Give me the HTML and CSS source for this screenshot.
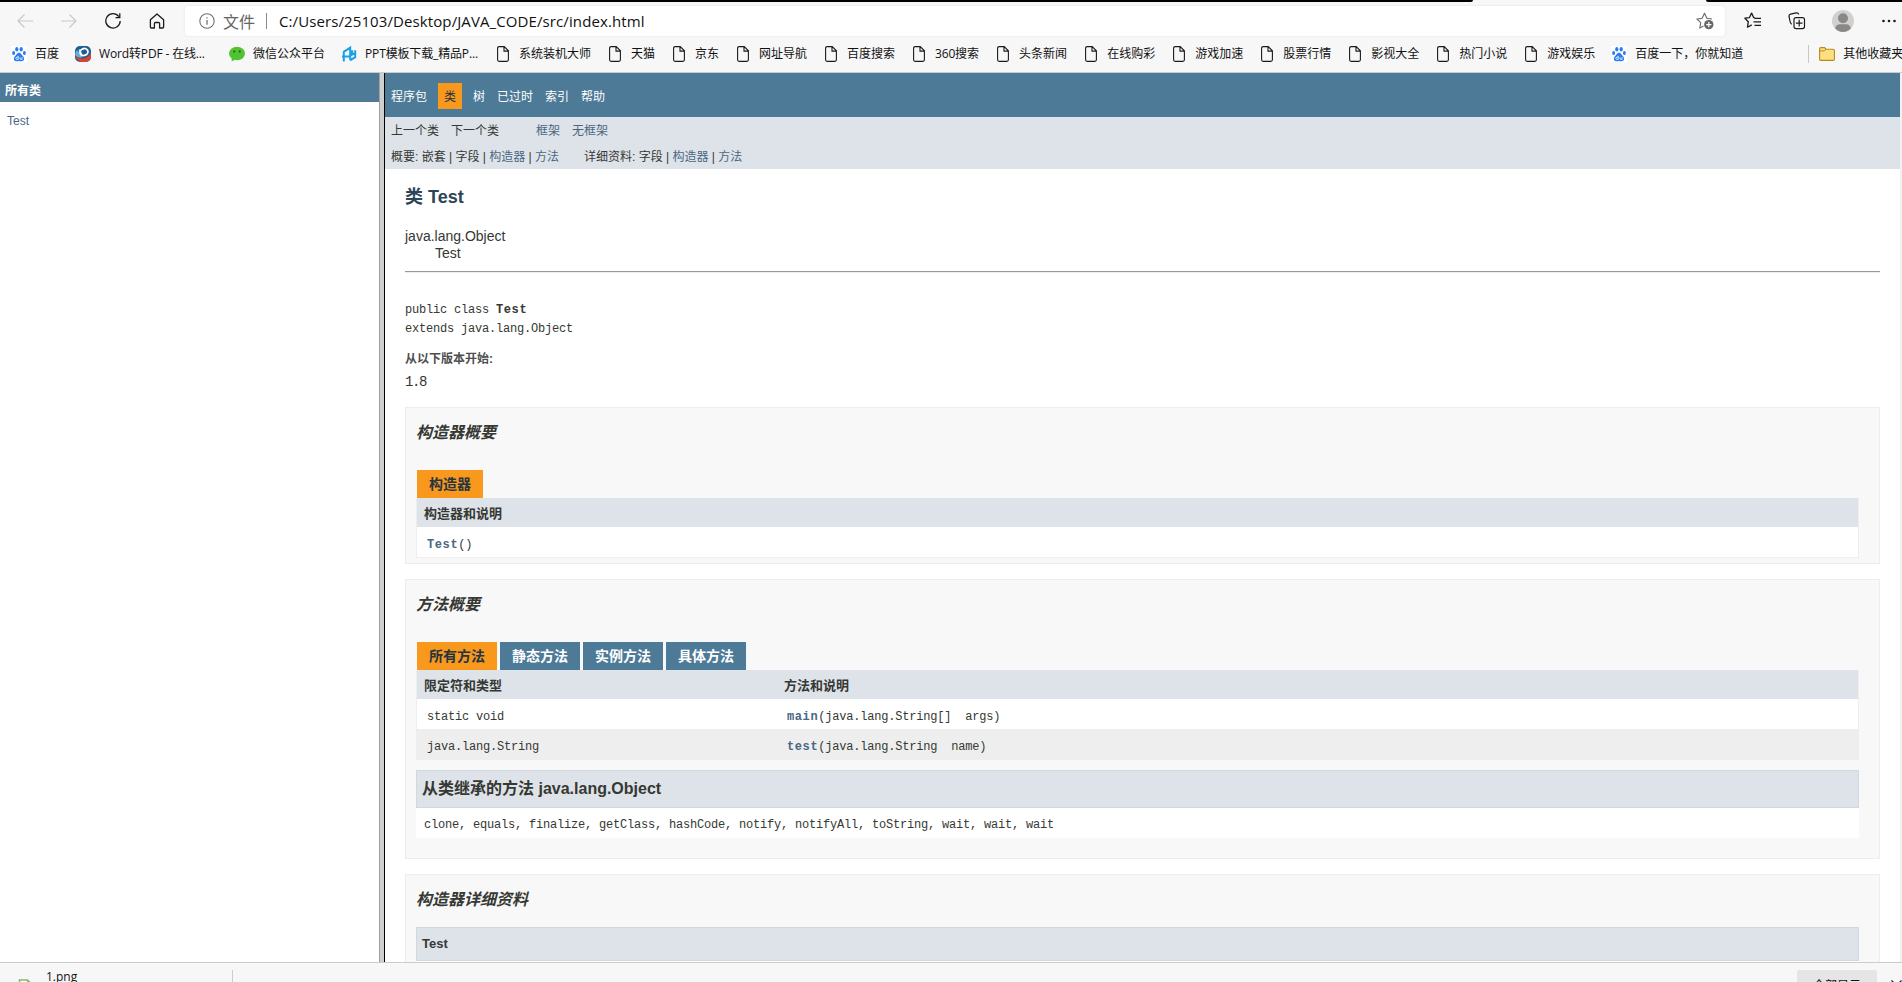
FILE: index.html
```html
<!DOCTYPE html>
<html lang="zh-CN">
<head>
    <meta charset="UTF-8">
    <title>Test</title>
    <link rel="stylesheet" href="styles.css">
</head>
<body>
    <!-- icons used more than once -->
    <svg class="defs" width="0" height="0">
        <symbol id="page" viewBox="0 0 16 16"><path d="M2.600 2.200q0-1.600 1.600-1.600h5l4.200 4.200v9q0 1.600-1.600 1.600H4.200q-1.600 0-1.600-1.600zM9 .8v4.300h4.300" fill="none" stroke="#1b1b1b" stroke-width="1.100"/></symbol>
        <symbol id="paw" viewBox="0 0 16 16">
            <rect width="16" height="16" fill="#fff"/>
            <g fill="#2a7cf0"><ellipse cx="5.800" cy="3.300" rx="1.600" ry="2.300"/><ellipse cx="10.200" cy="3.300" rx="1.600" ry="2.300"/><ellipse cx="2.600" cy="7" rx="1.500" ry="2.100"/><ellipse cx="13.400" cy="7" rx="1.500" ry="2.100"/><path d="M8 6.800c2 0 2.400 2 4 3.400 1.900 1.700 1.300 5-1.200 5-1 0-1.700-.3-2.800-.3s-1.800.3-2.800.3c-2.500 0-3.100-3.300-1.200-5C5.600 8.800 6 6.800 8 6.800z"/></g>
            <path d="M7.200 9.800v3.600H6q-1.200 0-1.200-1.100T6 11.200h1.200M9 11.200v1.400q0 .8.800.8h1.300v-2.300" fill="none" stroke="#fff" stroke-width=".8"/>
        </symbol>
    </svg>

    <div class="tabstrip"><span class="strip-left"></span><span class="strip-right"></span></div>

    <div class="toolbar">
        <div class="nav-buttons">
            <svg width="16" height="16" viewBox="0 0 16 16"><path d="M16 8H1M7.500 1.500 1 8l6.500 6.500" fill="none" stroke="#c9c9c9" stroke-width="1.200"/></svg>
            <svg width="16" height="16" viewBox="0 0 16 16"><path d="M0 8h15M8.500 1.500 15 8l-6.500 6.500" fill="none" stroke="#c9c9c9" stroke-width="1.200"/></svg>
            <svg width="16" height="16" viewBox="0 0 16 16"><path d="M13.800 3.600A7.200 7.200 0 1 0 15.200 8M14.800.3v4.300h-4.300" fill="none" stroke="#1b1b1b" stroke-width="1.300"/></svg>
            <svg width="16" height="16" viewBox="0 0 16 16"><path d="M1.400 6.700 8 .9l6.600 5.800V14q0 1-1 1h-3v-4.500q0-1-1-1H6.400q-1 0-1 1V15h-3q-1 0-1-1z" fill="none" stroke="#1b1b1b" stroke-width="1.300" stroke-linejoin="round"/></svg>
        </div>
        <div class="address">
            <svg width="16" height="16" viewBox="0 0 16 16"><circle cx="8" cy="8" r="7.200" fill="none" stroke="#717171" stroke-width="1.100"/><path d="M8 7v4.800M8 4.200v1.400" stroke="#717171" stroke-width="1.300"/></svg>
            <span class="scheme">文件</span>
            <span class="bar"></span>
            <span class="url">C:/Users/25103/Desktop/JAVA_CODE/src/index.html</span>
            <svg class="fav" width="18" height="18" viewBox="0 0 18 18"><path d="M7.500 14 3.800 16l.9-5.400L.9 7l5.200-.7L8.500 1.200l2.400 5.100L16 7" fill="none" stroke="#717171" stroke-width="1.200" stroke-linejoin="round"/><circle cx="12.800" cy="12.600" r="4.700" fill="#686868"/><path d="M12.800 10v5.200M10.200 12.600h5.200" stroke="#fff" stroke-width="1.200"/></svg>
        </div>
        <div class="actions">
            <svg width="18" height="18" viewBox="0 0 18 18"><path d="M11 5.800 9.600 5.600 7.600 1.100 5.500 5.600.9 6.200l3.400 3.500-.8 5.500 4.200-2.300M10.500 6.300H17M9.500 9.800H17M10.500 13.300H17" fill="none" stroke="#1b1b1b" stroke-width="1.300" stroke-linejoin="round"/></svg>
            <svg width="18" height="18" viewBox="0 0 18 18"><path d="M3.800 12.200Q2.500 11.500 2.200 10L1 4.500Q.7 2.600 2.500 2.100L8.300.9q1.800-.3 2.500 1.600M8 5.600h6.500q2 0 2 2v7q0 2-2 2H8q-2 0-2-2v-7q0-2 2-2M11.200 7.800v6.600M7.900 11.100h6.600" fill="none" stroke="#1b1b1b" stroke-width="1.200"/></svg>
            <svg class="avatar" width="22" height="22" viewBox="0 0 22 22"><circle cx="11" cy="11" r="11" fill="#d2d0ce"/><circle cx="11" cy="8.300" r="5" fill="#8a8886"/><path d="M3.200 18.200Q4 14.200 8 14.200h6q4 0 4.800 4-3 3.800-7.800 3.800t-7.800-3.800z" fill="#8a8886"/></svg>
            <svg width="16" height="16" viewBox="0 0 16 16"><g fill="#1b1b1b"><circle cx="2.500" cy="8" r="1.300"/><circle cx="8" cy="8" r="1.300"/><circle cx="13.500" cy="8" r="1.300"/></g></svg>
        </div>
    </div>

    <div class="bookmarks">
        <div class="bm"><svg><use href="#paw"/></svg><span>百度</span></div>
        <div class="bm"><svg viewBox="0 0 16 16"><rect width="16" height="16" rx="5" fill="#1d5f94"/><path d="M0 9q5 5 10 3t6-6v5q-1 5-6 5H6q-4-1-6-7z" fill="#d9432f"/><path d="M0 9q3 3 6 3l1-3-5-5Q0 6 0 9z" fill="#5fb0dc"/><ellipse cx="9" cy="6" rx="4" ry="3.400" fill="none" stroke="#fff" stroke-width="1.800" transform="rotate(-20 9 6)"/><path d="M4.500 3.500 7 10.500" stroke="#fff" stroke-width="1.500"/></svg><span class="wide">Word转PDF - 在线...</span></div>
        <div class="bm"><svg viewBox="0 0 16 16"><ellipse cx="8" cy="7.500" rx="8" ry="6.700" fill="#51c332"/><path d="m3 12-.5 3.500L6 13.800z" fill="#51c332"/><circle cx="5.300" cy="5.500" r="1.100" fill="#245b17"/><circle cx="10.700" cy="5.500" r="1.100" fill="#245b17"/></svg><span>微信公众平台</span></div>
        <div class="bm"><svg viewBox="0 0 16 16"><path d="M2.800 15.500V5.800L9.200 1.600v12.700M1 10.600h7.500M11.200 4.300v4.200l3-1.600V4.200M14.200 6.800v4.300l-5 3.200" fill="none" stroke="#1ba0e8" stroke-width="2"/></svg><span class="wide">PPT模板下载_精品P...</span></div>
        <div class="bm"><svg><use href="#page"/></svg><span>系统装机大师</span></div>
        <div class="bm"><svg><use href="#page"/></svg><span>天猫</span></div>
        <div class="bm"><svg><use href="#page"/></svg><span>京东</span></div>
        <div class="bm"><svg><use href="#page"/></svg><span>网址导航</span></div>
        <div class="bm"><svg><use href="#page"/></svg><span>百度搜索</span></div>
        <div class="bm"><svg><use href="#page"/></svg><span class="narrow">360搜索</span></div>
        <div class="bm"><svg><use href="#page"/></svg><span>头条新闻</span></div>
        <div class="bm"><svg><use href="#page"/></svg><span>在线购彩</span></div>
        <div class="bm"><svg><use href="#page"/></svg><span>游戏加速</span></div>
        <div class="bm"><svg><use href="#page"/></svg><span>股票行情</span></div>
        <div class="bm"><svg><use href="#page"/></svg><span>影视大全</span></div>
        <div class="bm"><svg><use href="#page"/></svg><span>热门小说</span></div>
        <div class="bm"><svg><use href="#page"/></svg><span>游戏娱乐</span></div>
        <div class="bm"><svg><use href="#paw"/></svg><span>百度一下，你就知道</span></div>
        <div class="bm others"><svg viewBox="0 0 16 16"><path d="M.6 3q0-1.400 1.400-1.400h3.600L7 3.200h7q1.400 0 1.400 1.400V13q0 1.400-1.400 1.400H2Q.6 14.400.6 13z" fill="#ffdf82" stroke="#b58a1c" stroke-width="1.100"/><path d="M.6 4.900h4.600L7 3.200" fill="none" stroke="#b58a1c"/></svg><span>其他收藏夹</span></div>
    </div>

    <div class="frames">
        <div class="left-frame">
            <h1 class="bar-title">所有类</h1>
            <a class="class-link">Test</a>
        </div>
        <div class="splitter"></div>
        <div class="right-frame">
            <ul class="top-nav">
                <li>程序包</li><li class="active">类</li><li>树</li><li>已过时</li><li>索引</li><li>帮助</li>
            </ul>
            <div class="sub-nav">
                <div class="sub-row"><span>上一个类</span><span>下一个类</span><a class="frames-link">框架</a><a>无框架</a></div>
                <div class="sub-row last"><span class="outline">概要: 嵌套 | 字段 | <a>构造器</a> | <a>方法</a></span><span>详细资料: 字段 | <a>构造器</a> | <a>方法</a></span></div>
            </div>
            <div class="content">
                <h2 class="title">类 Test</h2>
                <ul class="inheritance">
                    <li>java.lang.Object</li>
                    <li class="child">Test</li>
                </ul>
                <hr>
                <pre>public class <b>Test</b>
extends java.lang.Object</pre>
                <div class="since-label">从以下版本开始:</div>
                <div class="since">1.8</div>

                <div class="block constructors">
                    <h3>构造器概要</h3>
                    <div class="tabs"><span class="tab active">构造器</span></div>
                    <div class="table">
                        <div class="row head"><span>构造器和说明</span></div>
                        <div class="row"><code><a>Test</a>()</code></div>
                    </div>
                </div>

                <div class="block methods">
                    <h3>方法概要</h3>
                    <div class="tabs"><span class="tab active">所有方法</span><span class="tab">静态方法</span><span class="tab">实例方法</span><span class="tab">具体方法</span></div>
                    <div class="table two">
                        <div class="row head"><span>限定符和类型</span><span>方法和说明</span></div>
                        <div class="row"><code>static void</code><code><a>main</a>(java.lang.String[]&nbsp; args)</code></div>
                        <div class="row alt"><code>java.lang.String</code><code><a>test</a>(java.lang.String&nbsp; name)</code></div>
                    </div>
                    <h4 class="inherited">从类继承的方法 java.lang.Object</h4>
                    <div class="inherited-list"><code>clone, equals, finalize, getClass, hashCode, notify, notifyAll, toString, wait, wait, wait</code></div>
                </div>

                <div class="block details">
                    <h3>构造器详细资料</h3>
                    <h4 class="member">Test</h4>
                    <div class="member-body"></div>
                </div>
            </div>
        </div>
        <div class="scroll-edge"></div>
    </div>

    <div class="downloads">
        <div class="download">
            <svg width="16" height="20" viewBox="0 0 16 20"><path d="M1.500 1h8l4 4v14h-12z" fill="#fff" stroke="#8bb56c" stroke-width="1.500"/><path d="M9 1v4h4.500z" fill="#8bb56c"/></svg>
            <span>1.png</span>
        </div>
        <div class="show-all">全部显示</div>
        <svg class="close" width="11" height="11" viewBox="0 0 11 11"><path d="m.5.5 10 10m0-10-10 10" stroke="#1b1b1b" stroke-width="1.200"/></svg>
    </div>
</body>
</html>
```

FILE: styles.css
```css
* {
    box-sizing: border-box;
}
body {
    margin: 0;
    height: 982px;
    overflow: hidden;
    display: flex;
    flex-direction: column;
    background: #f7f7f7;
    color: #353833;
    font-family: "Liberation Sans", "Noto Sans CJK SC", sans-serif;
    font-size: 12px;
}
h1, h2, h3, h4, ul, pre {
    margin: 0;
    padding: 0;
}
ul {
    list-style: none;
}
svg {
    display: block;
    flex: none;
}
.defs {
    position: absolute;
}

/* browser chrome */
.tabstrip {
    display: flex;
    justify-content: space-between;
    height: 2px;
    flex: none;
}
.strip-left, .strip-right {
    background: #000;
}
.strip-left {
    width: 1473px;
    border-bottom-right-radius: 2px;
}
.strip-right {
    width: 196px;
    border-bottom-left-radius: 2px;
}
.toolbar {
    display: flex;
    align-items: center;
    height: 38px;
    flex: none;
}
.nav-buttons {
    display: flex;
    flex: none;
    gap: 28px;
    width: 185px;
    padding-left: 17px;
}
.address {
    display: flex;
    flex: none;
    align-items: center;
    width: 1540px;
    height: 30px;
    padding: 0 11px 0 14px;
    background: #fff;
    border-radius: 4px;
    box-shadow: 0 0 3px rgba(0, 0, 0, 0.08);
    font-family: "Open Sans", "Noto Sans CJK SC", sans-serif;
    font-size: 15px;
}
.scheme {
    margin-left: 8px;
    width: 43px;
    color: #666;
    font-size: 16px;
}
.bar {
    width: 1px;
    height: 16px;
    background: #8a8a8a;
}
.url {
    margin-left: 12px;
    color: #111;
    white-space: nowrap;
    letter-spacing: 0.1px;
}
.fav {
    margin-left: auto;
}
.actions {
    display: flex;
    flex: none;
    align-items: center;
    padding-left: 19px;
}
.actions svg {
    margin-right: 26px;
}
.actions .avatar {
    margin-right: 27px;
}
.bookmarks {
    display: flex;
    align-items: center;
    gap: 16px;
    height: 33px;
    flex: none;
    padding: 0 0 4px 11px;
    border-bottom: 1px solid #ccc;
    color: #111;
    font-family: "Open Sans", "Noto Sans CJK SC", sans-serif;
}
.bm {
    display: flex;
    align-items: center;
    gap: 8px;
    flex: none;
    height: 18px;
    line-height: 18px;
    white-space: nowrap;
}
.bm svg {
    width: 16px;
    height: 16px;
}
.wide {
    width: 114px;
    letter-spacing: -0.15px;
}
.narrow {
    width: 44px;
    letter-spacing: -0.2px;
}
.others {
    margin-left: 49px;
    padding-left: 10px;
    border-left: 1px solid #c8c8c8;
}

/* javadoc frames */
.frames {
    display: flex;
    height: 889px;
    flex: none;
    background: #fff;
    overflow: hidden;
}
.left-frame {
    width: 379px;
}
.bar-title {
    height: 29px;
    padding-left: 5px;
    background: #4d7a97;
    color: #fff;
    font-size: 12px;
    line-height: 36px;
}
.class-link {
    display: block;
    margin: 10px 0 0 7px;
    font-size: 12px;
    line-height: 18px;
}
a {
    color: #4a6782;
    text-decoration: none;
}
.splitter {
    width: 6px;
    background: #cfcfcf;
    border-left: 1px solid #a0a0a0;
    border-right: 1px solid #000;
}
.right-frame {
    flex: 1;
}
.scroll-edge {
    width: 2px;
    background: #f1f1f1;
}
.top-nav {
    display: flex;
    gap: 12px;
    height: 44px;
    padding: 10px 0 0 6px;
    background: #4d7a97;
    color: #fff;
    line-height: 28px;
}
.top-nav .active {
    height: 26px;
    margin: 0 -1px;
    padding: 0 6px;
    background: #f8981d;
    color: #253441;
}
.sub-nav {
    height: 52px;
    padding-left: 6px;
    background: #dee3e9;
}
.sub-row {
    display: flex;
    gap: 12px;
    height: 26px;
    line-height: 28px;
}
.sub-row.last {
    line-height: 29px;
}
.frames-link {
    margin-left: 25px;
}
.outline {
    width: 181px;
}
.content {
    padding: 0 20px;
}
.title {
    padding-top: 13px;
    color: #2c4557;
    font-size: 18px;
    line-height: 30px;
}
.inheritance {
    padding-top: 16px;
    font-size: 14px;
    line-height: 17px;
}
.child {
    padding-left: 30px;
}
hr {
    height: 2px;
    margin: 9px 0 28px;
    border: 0;
    border-top: 1px solid #999;
    border-bottom: 1px solid #eee;
}
pre, code, .since {
    font-family: "Liberation Mono", monospace;
    font-size: 12px;
    letter-spacing: -0.2px;
}
pre {
    line-height: 19px;
}
pre b, code a {
    font-weight: bold;
    letter-spacing: 0.6px;
}
.since-label {
    margin-top: 9px;
    color: #4e4e4e;
    font-weight: bold;
    line-height: 22px;
}
.since {
    margin: 2px 0 15px;
    font-size: 14px;
    letter-spacing: -1.4px;
    line-height: 20px;
}
.block {
    height: 157px;
    margin-bottom: 15px;
    padding: 0 20px 0 10px;
    background: #f8f8f8;
    border: 1px solid #ededed;
}
.methods {
    height: 280px;
}
.block h3 {
    height: 62px;
    padding-top: 12px;
    font-size: 16px;
    font-style: italic;
    line-height: 26px;
}
.tabs {
    display: flex;
    gap: 3px;
    padding-left: 1px;
}
.tab {
    height: 28px;
    padding: 0 12px;
    background: #4d7a97;
    color: #fff;
    font-size: 14px;
    font-weight: bold;
    line-height: 28px;
}
.tab.active {
    background: #f8981d;
    color: #253441;
}
.table {
    border: 1px solid #eee;
    border-top: 0;
}
.row {
    display: grid;
    grid-template-columns: 1fr;
    height: 30px;
    padding-left: 10px;
    background: #fff;
    line-height: 36px;
}
.two .row {
    grid-template-columns: 360px 1fr;
}
.row.head {
    height: 29px;
    padding-left: 7px;
    background: #dee3e9;
    font-size: 13px;
    font-weight: bold;
    line-height: 31px;
}
.row.alt {
    background: #eeeeef;
}
.inherited, .member {
    padding-left: 5px;
    background: #dee3e9;
    border: 1px solid #d0d9e0;
}
.inherited {
    height: 38px;
    margin-top: 10px;
    font-size: 16px;
    line-height: 36px;
}
.inherited-list {
    height: 30px;
    padding-left: 8px;
    background: #fff;
    line-height: 32px;
}
.details h3 {
    height: 52px;
}
.member {
    height: 34px;
    font-size: 13px;
    line-height: 32px;
}
.member-body {
    height: 40px;
    background: #fff;
}

/* download shelf */
.downloads {
    display: flex;
    align-items: flex-start;
    height: 60px;
    flex: none;
    padding-top: 7px;
    border-top: 1px solid #ccc;
    color: #111;
    font-family: "Open Sans", "Noto Sans CJK SC", sans-serif;
}
.download {
    display: flex;
    gap: 12px;
    width: 233px;
    height: 40px;
    padding-left: 18px;
    border-right: 1px solid #ccc;
    line-height: 13px;
}
.download svg {
    margin-top: 9px;
}
.show-all {
    width: 80px;
    height: 32px;
    margin-left: auto;
    background: #e5e5e5;
    border-radius: 2px;
    line-height: 32px;
    text-align: center;
}
.close {
    margin: 10px 0 0 14px;
}
```
